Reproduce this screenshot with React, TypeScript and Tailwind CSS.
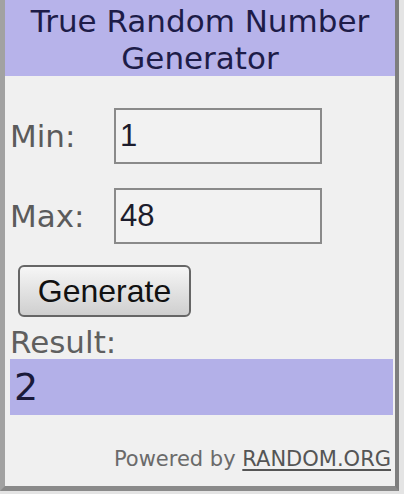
import React from "react";

export default function App() {
  const dj = "font-['DejaVu_Sans',Verdana,sans-serif]";
  return (
    <div className="w-[404px] h-[494px] bg-[#e4e4e4] overflow-hidden">
      <div className="w-[399px] h-[491px] border-l-[5px] border-r-[4px] border-b-[5px] border-l-[#a2a2a2] border-r-[#7e7e7e] border-b-[#8a8a8a] bg-[#f0f0f0] flex flex-col">
        <div
          className={`h-[76px] bg-[#b7b3ea] pt-[3px] text-center text-[31px] leading-[37px] text-[#1d1c48] ${dj}`}
        >
          True Random Number
          <br />
          Generator
        </div>

        <div className="flex flex-col pl-[5px]">
          <div className="mt-[32px] flex items-center">
            <span className={`w-[104px] text-[31px] leading-[36px] text-[#5b5b5b] ${dj}`}>Min:</span>
            <input
              readOnly
              defaultValue="1"
              className="w-[208px] h-[56px] border-2 border-[#8a8a8a] bg-[#f2f2f2] pl-[4px] text-[31px] text-[#1c1c2c] font-['Liberation_Sans',Arial,sans-serif] outline-none"
            />
          </div>
          <div className="mt-[24px] flex items-center">
            <span className={`w-[104px] text-[31px] leading-[36px] text-[#5b5b5b] ${dj}`}>Max:</span>
            <input
              readOnly
              defaultValue="48"
              className="w-[208px] h-[56px] border-2 border-[#8a8a8a] bg-[#f2f2f2] pl-[4px] text-[31px] text-[#1c1c2c] font-['Liberation_Sans',Arial,sans-serif] outline-none"
            />
          </div>
          <div className="mt-[21px] pl-[8px]">
            <button className="w-[173px] h-[52px] rounded-[6px] border-2 border-[#666666] bg-gradient-to-b from-[#f6f6f6] to-[#cfcfcf] text-[32px] leading-none text-[#111111] font-['Liberation_Sans',Arial,sans-serif]">
              Generate
            </button>
          </div>
          <div className={`mt-[9px] text-[31px] leading-[33px] text-[#5f5f5f] ${dj}`}>Result:</div>
          <div className="mr-[2px] h-[56px] bg-[#b3b0e8] flex items-center pl-[4px]">
            <span className={`text-[38px] leading-none text-[#1a1a3a] ${dj}`}>2</span>
          </div>
          <div className={`mt-[32px] pr-[4px] text-right text-[21px] leading-[24px] text-[#6a6a6a] ${dj}`}>
            Powered by <span className="underline decoration-2 underline-offset-[3px] text-[#555555]">RANDOM.ORG</span>
          </div>
        </div>
      </div>
    </div>
  );
}
